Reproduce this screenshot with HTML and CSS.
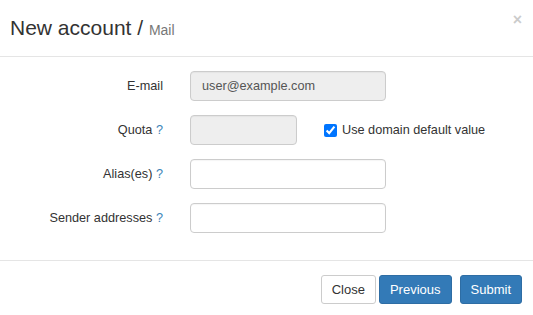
FILE: index.html
```html
<!DOCTYPE html>
<html>
<head>
  <title>New account</title>
  <link rel="stylesheet" href="styles.css">
</head>
<body>
  <div class="modal">
    <div class="modal-header">
      <h3 class="modal-title">New account / <small>Mail</small></h3>
      <span class="close">&times;</span>
    </div>

    <form class="modal-body">
      <label class="form-label">E-mail</label>
      <div class="field">
        <input class="form-control" type="text" value="user@example.com" readonly>
      </div>

      <label class="form-label">Quota <span class="help">?</span></label>
      <div class="field">
        <input class="form-control quota" type="text" disabled>
        <label class="check">
          <input type="checkbox" checked>
          Use domain default value
        </label>
      </div>

      <label class="form-label">Alias(es) <span class="help">?</span></label>
      <div class="field">
        <input class="form-control" type="text">
      </div>

      <label class="form-label">Sender addresses <span class="help">?</span></label>
      <div class="field">
        <input class="form-control" type="text">
      </div>
    </form>

    <div class="modal-footer">
      <button class="btn btn-default">Close</button>
      <button class="btn btn-primary prev">Previous</button>
      <button class="btn btn-primary submit">Submit</button>
    </div>
  </div>
</body>
</html>
```

FILE: styles.css
```css
body {
  margin: 0;
  padding: 0;
  background: #fff;
  font-family: 'Liberation Sans', Arial, Helvetica, sans-serif;
  font-size: 12.7px;
  color: #333;
}
.modal {
  width: 533px;
  height: 315px;
  overflow: hidden;
}
.modal-header {
  display: flex;
  justify-content: space-between;
  align-items: flex-start;
  height: 43px;
  padding: 13px 11px 0 10px;
  border-bottom: 1px solid #e5e5e5;
}
.modal-title {
  margin: 0;
  font-size: 21px;
  font-weight: normal;
  line-height: 30px;
  color: #333;
}
.modal-title small {
  font-size: 14px;
  color: #777;
}
.close {
  margin-top: 1px;
  font-size: 16px;
  font-weight: bold;
  line-height: 12px;
  color: #000;
  opacity: 0.2;
}
.modal-body {
  display: grid;
  grid-template-columns: 163px 1fr;
  column-gap: 27px;
  row-gap: 14px;
  margin: 0;
  padding: 14px 0 27px 0;
}
.form-label {
  text-align: right;
  line-height: 30px;
  color: #333;
}
.help {
  color: #3c83b8;
}
.field {
  display: flex;
  align-items: center;
}
.form-control {
  box-sizing: border-box;
  width: 196px;
  height: 30px;
  padding: 0 11px;
  border: 1px solid #ccc;
  border-radius: 4px;
  background: #fff;
  font-family: inherit;
  font-size: 12.7px;
  color: #555;
  box-shadow: inset 0 1px 1px rgba(0,0,0,0.04);
}
.form-control[readonly],
.form-control[disabled] {
  background: #eee;
}
.quota {
  width: 107px;
}
.check {
  display: flex;
  align-items: center;
  gap: 5px;
  margin-left: 27px;
  color: #333;
}
.check input {
  margin: 0;
  width: 13px;
  height: 13px;
}
.modal-footer {
  display: flex;
  justify-content: flex-end;
  padding: 14px 11px 0 0;
  border-top: 1px solid #e5e5e5;
}
.btn {
  height: 29px;
  padding: 0 10px;
  border: 1px solid #ccc;
  border-radius: 3px;
  font-family: inherit;
  font-size: 13px;
  cursor: pointer;
}
.btn-default {
  background: #fff;
  color: #333;
}
.btn-primary {
  background: #337ab7;
  border-color: #2e6da4;
  color: #fff;
}
.prev {
  margin-left: 3px;
}
.submit {
  margin-left: 8px;
}
```
